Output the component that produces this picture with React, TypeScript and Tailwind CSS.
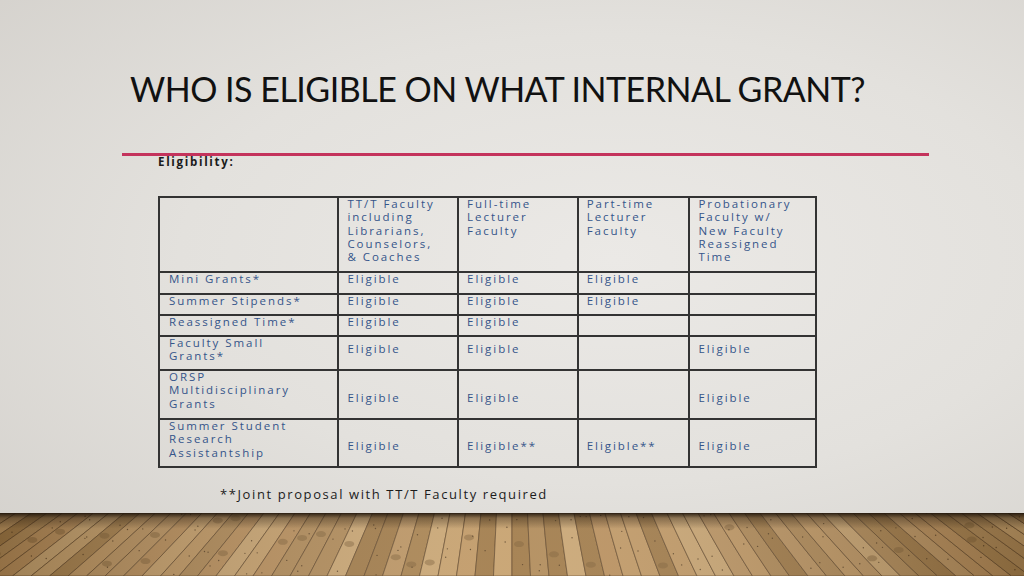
import React from "react";

const cols = [
  "TT/T Faculty including Librarians, Counselors, & Coaches",
  "Full-time Lecturer Faculty",
  "Part-time Lecturer Faculty",
  "Probationary Faculty w/ New Faculty Reassigned Time",
];

const headerLines = [
  ["TT/T Faculty", "including", "Librarians,", "Counselors,", "& Coaches"],
  ["Full-time", "Lecturer", "Faculty"],
  ["Part-time", "Lecturer", "Faculty"],
  ["Probationary", "Faculty w/", "New Faculty", "Reassigned", "Time"],
];

const rows = [
  { label: ["Mini Grants*"], vals: ["Eligible", "Eligible", "Eligible", ""], h: "h-[22px]", vpt: "pt-0" },
  { label: ["Summer Stipends*"], vals: ["Eligible", "Eligible", "Eligible", ""], h: "h-[21px]", vpt: "pt-0" },
  { label: ["Reassigned Time*"], vals: ["Eligible", "Eligible", "", ""], h: "h-[21px]", vpt: "pt-0" },
  { label: ["Faculty Small", "Grants*"], vals: ["Eligible", "Eligible", "", "Eligible"], h: "h-[34px]", vpt: "pt-[6px]" },
  { label: ["ORSP", "Multidisciplinary", "Grants"], vals: ["Eligible", "Eligible", "", "Eligible"], h: "h-[49px]", vpt: "pt-[21px]" },
  { label: ["Summer Student", "Research", "Assistantship"], vals: ["Eligible", "Eligible**", "Eligible**", "Eligible"], h: "h-[48px]", vpt: "pt-[20px]" },
];

const widths = ["w-[180px]", "w-[120px]", "w-[120px]", "w-[112px]", "w-[127px]"];

function hash(n: number) {
  const x = Math.sin(n * 127.1 + 311.7) * 43758.5453;
  return x - Math.floor(x);
}

const woods = ["#b08a58", "#bb9462", "#c6a06c", "#a8824f", "#b98f5c", "#c9a572", "#a07a48", "#c09864"];

function Floor() {
  const planks = [];
  for (let k = -40; k < 40; k++) {
    const t0 = 512 + k * 15.5;
    const t1 = 512 + (k + 1) * 15.5;
    const b0 = 512 + k * 18.5;
    const b1 = 512 + (k + 1) * 18.5;
    const c = woods[Math.floor(hash(k) * woods.length)];
    planks.push(
      <polygon key={"p" + k} points={`${t0},0 ${t1},0 ${b1},63 ${b0},63`} fill={c} stroke="#5e4425" strokeWidth="0.7" />
    );
    if (hash(k + 100) > 0.6) {
      const y = 5 + hash(k + 200) * 50;
      const x = t0 + (b0 - t0) * (y / 63) + 7;
      planks.push(<ellipse key={"k" + k} cx={x} cy={y} rx="5" ry="3" fill="#7a5a33" opacity="0.45" />);
    }
    for (let j = 0; j < 2; j++) {
      const y = hash(k * 7 + j) * 63;
      const x = t0 + (b0 - t0) * (y / 63) + 4 + hash(k * 3 + j) * 8;
      planks.push(<circle key={"d" + k + "-" + j} cx={x} cy={y} r="0.7" fill="#4a331a" opacity="0.8" />);
    }
  }
  return (
    <svg width="1024" height="63" viewBox="0 0 1024 63" className="block">
      <defs>
        <linearGradient id="sh" x1="0" y1="0" x2="0" y2="1">
          <stop offset="0" stopColor="#1e140a" stopOpacity="0.9" />
          <stop offset="0.08" stopColor="#1e140a" stopOpacity="0.35" />
          <stop offset="0.25" stopColor="#1e140a" stopOpacity="0" />
        </linearGradient>
        <linearGradient id="gl" x1="0" y1="0" x2="1" y2="0">
          <stop offset="0" stopColor="#3a2810" stopOpacity="0.3" />
          <stop offset="0.5" stopColor="#fff" stopOpacity="0.08" />
          <stop offset="1" stopColor="#3a2810" stopOpacity="0.3" />
        </linearGradient>
      </defs>
      {planks}
      <rect x="0" y="0" width="1024" height="63" fill="url(#gl)" />
      <rect x="0" y="0" width="1024" height="63" fill="url(#sh)" />
    </svg>
  );
}

export default function App() {
  return (
    <div className="w-[1024px] h-[576px] flex flex-col overflow-hidden bg-[radial-gradient(ellipse_at_60%_45%,#ebe9e6_0%,#e3e1dd_50%,#d3d0cb_100%)]">
      <div className="flex-1 flex flex-col">
        <h1 className="ml-[130px] mt-[70px] text-[34px] leading-[38px] tracking-[-0.5px] text-[#111] font-['Lato',sans-serif]">
          WHO IS ELIGIBLE ON WHAT INTERNAL GRANT?
        </h1>
        <div className="ml-[122px] mt-[45px] w-[807px] h-[3px] bg-[#c4335c]" />
        <div className="ml-[158px] -mt-px text-[11.5px] leading-[14px] font-bold tracking-[1.7px] text-[#1a1a1a] font-['Open_Sans',sans-serif]">
          Eligibility:
        </div>
        <div className="ml-[158px] mt-[27px] w-[659px] border-t-2 border-l-2 border-[#333] text-[#35558a] text-[11.5px] leading-[13.3px] tracking-[1.95px] font-medium font-['Open_Sans',sans-serif]">
          <div className="flex h-[75px]" aria-label={cols.join(" | ")}>
            <div className={`${widths[0]} border-r-2 border-b-2 border-[#333]`} />
            {headerLines.map((lines, i) => (
              <div key={i} className={`${widths[i + 1]} border-r-2 border-b-2 border-[#333] pl-[8px]`}>
                <div className="-mt-px">
                  {lines.map((l) => (
                    <div key={l}>{l}</div>
                  ))}
                </div>
              </div>
            ))}
          </div>
          {rows.map((r, ri) => (
            <div key={ri} className={`flex ${r.h}`}>
              <div className={`${widths[0]} border-r-2 border-b-2 border-[#333] pl-[9px]`}>
                <div className="-mt-px">
                  {r.label.map((l) => (
                    <div key={l}>{l}</div>
                  ))}
                </div>
              </div>
              {r.vals.map((v, vi) => (
                <div key={vi} className={`${widths[vi + 1]} border-r-2 border-b-2 border-[#333] pl-[8px] ${r.vpt}`}>
                  <div className="-mt-px">{v}</div>
                </div>
              ))}
            </div>
          ))}
        </div>
        <div className="ml-[220px] mt-[18px] text-[13px] leading-[16px] tracking-[1.6px] text-[#1c1c1c] font-['Open_Sans',sans-serif]">
          **Joint proposal with TT/T Faculty required
        </div>
      </div>
      <Floor />
    </div>
  );
}
